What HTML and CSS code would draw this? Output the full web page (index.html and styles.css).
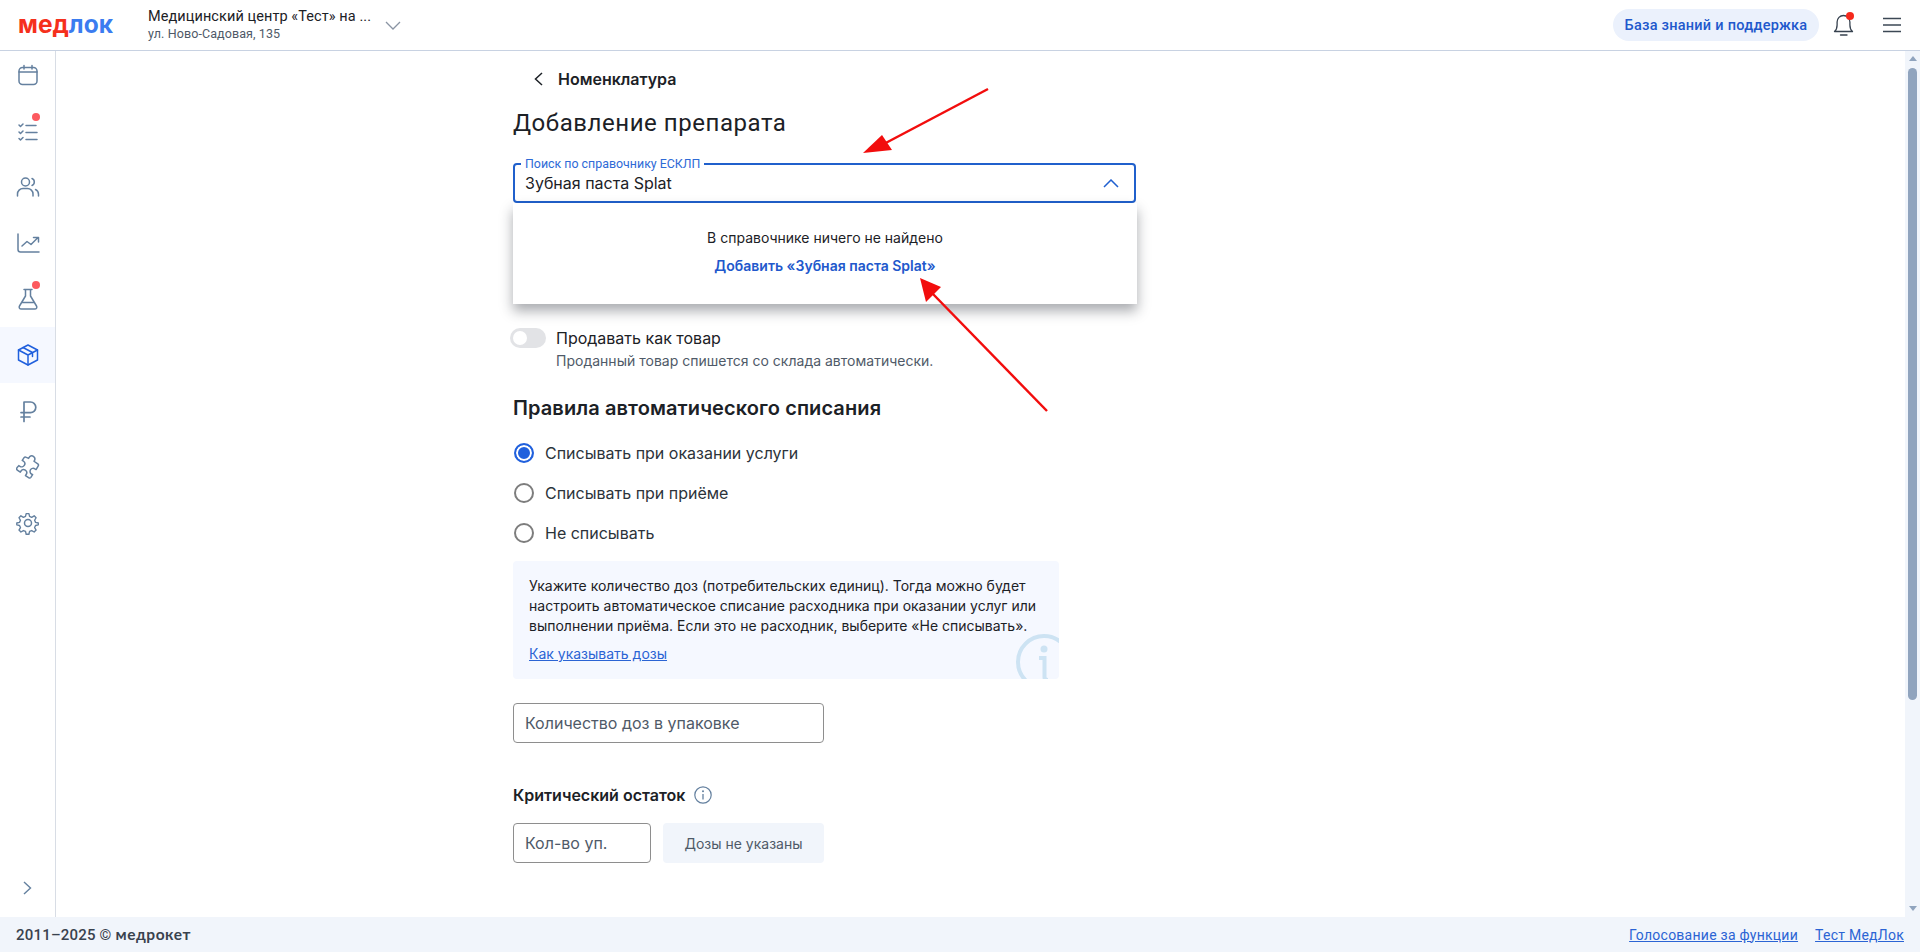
FILE: index.html
```html
<!DOCTYPE html>
<html lang="ru">
<head>
<meta charset="utf-8">
<title>Добавление препарата</title>
<link rel="stylesheet" href="styles.css">
</head>
<body>
<div class="app">
  <header class="topbar">
    <div class="logo"><span class="logo-red">мед</span><span class="logo-blue">лок</span></div>
    <div class="clinic">
      <div class="clinic-name">Медицинский центр «Тест» на ...</div>
      <div class="clinic-addr">ул. Ново-Садовая, 135</div>
    </div>
    <svg class="clinic-chev" width="16" height="9" viewBox="0 0 16 9"><path d="M1 1l7 7 7-7" fill="none" stroke="#8a94a3" stroke-width="1.3"/></svg>
    <div class="topbar-right">
      <a class="help-btn">База знаний и поддержка</a>
      <svg class="bell" width="24" height="26" viewBox="0 0 24 26"><path d="M2.5 19.5c1.8-1.6 2.6-3.6 2.6-6.6V10c0-3.6 2.8-6.5 6.4-6.5s6.4 2.9 6.4 6.5v2.900c0 3 .8 5 2.600 6.600z" fill="none" stroke="#37424f" stroke-width="1.300" stroke-linejoin="round"/><path d="M8.500 23h6.500" stroke="#37424f" stroke-width="1.300" stroke-linecap="round"/><circle cx="18" cy="4" r="4" fill="#f5291c"/></svg>
      <svg class="burger" width="18" height="16" viewBox="0 0 18 16"><path d="M0 1.500h18M0 8h18M0 14.500h18" stroke="#3c4855" stroke-width="1.300"/></svg>
    </div>
  </header>

  <div class="middle">
    <nav class="sidebar">
      <div class="nav-items">
        <div class="nav-item"><svg width="24" height="24" viewBox="0 0 24 24" fill="none" stroke="#64809f" stroke-width="1.500" stroke-linecap="round" stroke-linejoin="round"><rect x="3" y="4.500" width="18" height="17" rx="3.500"/><path d="M3 9h18M8 2.500v3.500M16 2.500v3.500"/></svg></div>
        <div class="nav-item"><svg width="24" height="24" viewBox="0 0 24 24" fill="none" stroke="#64809f" stroke-width="1.500" stroke-linecap="round" stroke-linejoin="round"><path d="M3 6l1.500 1.500L7 5M3 13l1.500 1.500L7 12M3 19.500L4.500 21 7 18.500M10 6.500h10M10 13.500h11M10 20.500h11"/></svg><span class="nav-dot"></span></div>
        <div class="nav-item"><svg width="24" height="24" viewBox="0 0 24 24" fill="none" stroke="#64809f" stroke-width="1.500" stroke-linecap="round"><circle cx="9.500" cy="7" r="4"/><path d="M1.500 21v-2c0-3 2.500-5.500 5.500-5.500h4.500c3 0 5.500 2.500 5.500 5.500v2M16 3.500c1.500.6 2.300 2 2.300 3.500s-.8 2.900-2.300 3.500M19.500 14.500c1.900.9 3 2.600 3 4.700V21"/></svg></div>
        <div class="nav-item"><svg width="24" height="24" viewBox="0 0 24 24" fill="none" stroke="#64809f" stroke-width="1.500" stroke-linecap="round" stroke-linejoin="round"><path d="M2 3v15.500c0 1.700 1 2.500 2.500 2.500H23M6 15l5-4.500 4 3 7-7M17.500 6.500H22.500V11"/></svg></div>
        <div class="nav-item"><svg width="24" height="24" viewBox="0 0 24 24" fill="none" stroke="#64809f" stroke-width="1.500" stroke-linecap="round" stroke-linejoin="round"><path d="M8 2.500h8M9.500 2.500v6.500L3.500 19c-.9 1.500.1 3 1.800 3h13.400c1.700 0 2.700-1.500 1.800-3l-6-10V2.500M6 15.500h12"/></svg><span class="nav-dot"></span></div>
        <div class="nav-item active"><svg width="24" height="24" viewBox="0 0 24 24" fill="none" stroke="#2060dd" stroke-width="1.500" stroke-linecap="round" stroke-linejoin="round"><path d="M12 2l9.500 5v10L12 22l-9.500-5V7z"/><path d="M2.500 7L12 12l9.500-5M12 12v10M7 4.500l9.500 5v4"/></svg></div>
        <div class="nav-item"><svg width="24" height="24" viewBox="0 0 24 24" fill="none" stroke="#64809f" stroke-width="1.700" stroke-linecap="round" stroke-linejoin="round"><path d="M8 22.500V3h6.500a5.300 5.300 0 0 1 0 10.600H5M5 18h9"/></svg></div>
        <div class="nav-item"><svg width="24" height="24" viewBox="0 0 24 24" fill="none" stroke="#64809f" stroke-width="1.300" stroke-linecap="round" stroke-linejoin="round"><path transform="translate(12 12) scale(1.150) translate(-12 -13)" d="M12.500 5.500l1-1.500a2.700 2.700 0 0 1 4.200 3.200l-.5.8 3.300 2.200c.7.500.8 1.200.3 2l-1.800 3-1-.6a2.700 2.700 0 0 0-3 4.500l1 .6-1.500 2.300c-.5.700-1.200.8-2 .3l-2.700-1.800.6-1a2.700 2.700 0 0 0-4.500-3l-.6 1-2.600-1.800c-.7-.5-.8-1.200-.3-2L4 11.800l1 .6a2.700 2.700 0 0 0 3-4.500l-1-.6 1.600-2.400c.5-.7 1.200-.8 2-.3z"/></svg></div>
        <div class="nav-item"><svg width="24" height="24" viewBox="0 0 24 24" fill="none" stroke="#64809f" stroke-width="1.500" stroke-linecap="round" stroke-linejoin="round"><circle cx="12" cy="12" r="3.500"/><path d="M10.500 1.800h3l.7 3 2.300 1 2.700-1.600 2.100 2.100-1.600 2.700 1 2.300 3 .7l0 2-3 .7-1 2.300 1.600 2.700-2.100 2.100-2.700-1.600-2.300 1-.7 3h-3l-.7-3-2.300-1-2.700 1.600-2.100-2.100 1.600-2.700-1-2.300-3-.7v-2l3-.7 1-2.300-1.600-2.700 2.100-2.100 2.700 1.600 2.300-1z" transform="translate(12 12) scale(.92) translate(-12.500 -12)"/></svg></div>
      </div>
      <div class="nav-expand"><svg width="9" height="14" viewBox="0 0 9 14"><path d="M1 1l6.500 6L1 13" fill="none" stroke="#64809f" stroke-width="1.400"/></svg></div>
    </nav>

    <main class="content">
      <div class="form">
        <div class="crumb">
          <svg width="9" height="14" viewBox="0 0 9 14"><path d="M8 1L1.500 7 8 13" fill="none" stroke="#1c2126" stroke-width="1.500"/></svg>
          <span>Номенклатура</span>
        </div>
        <h1 class="page-title">Добавление препарата</h1>

        <div class="search">
          <span class="float-label">Поиск по справочнику ЕСКЛП</span>
          <span class="search-value">Зубная паста Splat</span>
          <svg class="search-chev" width="16" height="9" viewBox="0 0 16 9"><path d="M1 8l7-7 7 7" fill="none" stroke="#2060d0" stroke-width="1.500"/></svg>
          <div class="dropdown">
            <div class="dd-empty">В справочнике ничего не найдено</div>
            <a class="dd-add">Добавить «Зубная паста Splat»</a>
          </div>
        </div>

        <div class="toggle-row">
          <span class="toggle"><span class="toggle-knob"></span></span>
          <div>
            <div class="toggle-label">Продавать как товар</div>
            <div class="toggle-hint">Проданный товар спишется со склада автоматически.</div>
          </div>
        </div>

        <h2 class="section-title">Правила автоматического списания</h2>

        <div class="radios">
          <div class="radio-row"><span class="radio checked"></span>Списывать при оказании услуги</div>
          <div class="radio-row"><span class="radio"></span>Списывать при приёме</div>
          <div class="radio-row"><span class="radio"></span>Не списывать</div>
        </div>

        <div class="info-box">
          <p>Укажите количество доз (потребительских единиц). Тогда можно будет настроить автоматическое списание расходника при оказании услуг или выполнении приёма. Если это не расходник, выберите «Не списывать».</p>
          <a class="info-link">Как указывать дозы</a>
          <svg class="info-mark" width="60" height="60" viewBox="0 0 60 60" fill="none"><circle cx="30" cy="30" r="26" stroke="#cde3f3" stroke-width="4"/><circle cx="30" cy="17" r="3.500" fill="#cde3f3"/><path d="M25 26h5.500v19c0 2 1 3 3.500 3" stroke="#cde3f3" stroke-width="4"/></svg>
        </div>

        <div class="input dose-input">Количество доз в упаковке</div>

        <div class="crit-title">
          <span>Критический остаток</span>
          <svg width="18" height="18" viewBox="0 0 18 18" fill="none"><circle cx="9" cy="9" r="8.200" stroke="#64809f" stroke-width="1.200"/><circle cx="9" cy="5.300" r="1" fill="#64809f"/><path d="M9 8v5.500" stroke="#64809f" stroke-width="1.300"/></svg>
        </div>
        <div class="crit-row">
          <div class="input crit-input">Кол-во уп.</div>
          <div class="crit-note">Дозы не указаны</div>
        </div>
      </div>
    </main>

    <div class="scrollbar">
      <span class="sb-up"></span>
      <span class="sb-thumb"></span>
      <span class="sb-space"></span>
      <span class="sb-down"></span>
    </div>
  </div>

  <footer class="footer">
    <div class="copy">2011–2025 © <span class="copy-brand">медрокет</span></div>
    <div class="footer-links"><a>Голосование за функции</a><a>Тест МедЛок</a></div>
  </footer>
</div>

<svg class="annotations" width="1920" height="952" viewBox="0 0 1920 952">
  <path d="M988 89L880 146" stroke="#f20d0d" stroke-width="2.500"/>
  <path d="M863 153L882 135L892 150z" fill="#f20d0d"/>
  <path d="M1047 411L932 293" stroke="#f20d0d" stroke-width="2.500"/>
  <path d="M920 278L941 287L926 302z" fill="#f20d0d"/>
</svg>
</body>
</html>
```

FILE: styles.css
```css
* { box-sizing: border-box; }
html, body { margin: 0; height: 100%; overflow: hidden; }
body { font-family: Inter, "Noto Sans", sans-serif; color: #1c2126; background: #fff; }
a { cursor: pointer; }

.app { display: flex; flex-direction: column; height: 952px; }

/* top bar */
.topbar { flex: 0 0 51px; display: flex; align-items: center; border-bottom: 1px solid #c8d2e2; padding-left: 18px; background: #fff; }
.logo { width: 130px; font-family: Inter, sans-serif; font-weight: 700; font-size: 24.500px; line-height: 1; letter-spacing: 0; position: relative; top: -1px; }
.logo-red { color: #f5301c; }
.logo-blue { color: #3b7cf0; }
.clinic { width: 237px; }
.clinic-name { font-family: Roboto, sans-serif; font-size: 14.500px; line-height: 18px; color: #1c2126; letter-spacing: .08px; }
.clinic-addr { font-family: Roboto, sans-serif; font-size: 12.500px; line-height: 16px; color: #4f5a68; letter-spacing: .1px; }
.clinic-chev { margin-top: 1px; }
.topbar-right { margin-left: auto; display: flex; align-items: center; }
.help-btn { height: 32px; width: 206px; display: flex; align-items: center; justify-content: center; border-radius: 16px; background: #ebf1fc; color: #2158cc; font-family: Roboto, sans-serif; font-weight: 500; font-size: 14.500px; letter-spacing: .25px; }
.bell { margin-left: 13px; }
.burger { margin-left: 27px; margin-right: 19px; }

/* middle */
.middle { flex: 1; display: flex; min-height: 0; }
.sidebar { flex: 0 0 56px; border-right: 1px solid #d8dde5; display: flex; flex-direction: column; justify-content: space-between; }
.nav-items { display: flex; flex-direction: column; }
.nav-item { height: 56px; display: flex; align-items: center; justify-content: center; position: relative; }
.nav-item:first-child { height: 48px; margin-bottom: 4px; }
.nav-item.active { background: #f5f8ff; }
.nav-dot { position: absolute; left: 32px; top: 10px; width: 8px; height: 8px; border-radius: 50%; background: #fc5a5f; }
.nav-expand { height: 58px; display: flex; align-items: center; justify-content: center; }

.content { flex: 1; min-width: 0; padding-left: 457px; }
.form { width: 623px; padding-top: 16px; }
.crumb { display: flex; align-items: center; height: 24px; padding-left: 21px; gap: 15px; font-weight: 600; font-size: 16px; }
.page-title { margin: 15px 0 0; font-family: Roboto, sans-serif; font-weight: 400; font-size: 24px; line-height: 34px; letter-spacing: .55px; color: #1c2126; }

.search { position: relative; margin-top: 23px; height: 40px; border: 2px solid #2060cc; border-radius: 4px; padding-left: 10px; display: flex; align-items: center; background: #fff; }
.float-label { position: absolute; left: 6px; top: -8px; padding: 0 4px; background: #fff; font-family: Roboto, sans-serif; font-size: 12.400px; line-height: 13px; color: #2e6ad6; }
.search-value { font-size: 16px; }
.search-chev { position: absolute; right: 15px; top: 14px; }
.dropdown { position: absolute; left: -2px; right: -3px; top: 38px; height: 101px; background: #fff; box-shadow: 0 7px 12px rgba(30, 35, 45, .38); display: flex; flex-direction: column; align-items: center; padding-top: 25px; z-index: 2; }
.dd-empty { font-size: 14px; line-height: 20px; }
.dd-add { margin-top: 8px; font-size: 14px; line-height: 20px; font-weight: 600; color: #2158cc; }

.toggle-row { display: flex; margin-top: 125px; margin-left: -3px; gap: 10px; }
.toggle { flex: none; width: 36px; height: 20px; border-radius: 10px; background: #e2e3e6; padding: 3px; margin-top: 0; }
.toggle-knob { display: block; width: 14px; height: 14px; border-radius: 50%; background: #fff; }
.toggle-label { font-size: 16px; line-height: 20px; color: #1c2126; }
.toggle-hint { font-size: 14px; line-height: 20px; margin-top: 3px; color: #4f5a68; letter-spacing: .01px; }

.section-title { margin: 23px 0 0; font-weight: 600; font-size: 20px; line-height: 28px; letter-spacing: .1px; color: #1c2126; }

.radios { margin-top: 21px; display: flex; flex-direction: column; gap: 20px; }
.radio-row { display: flex; align-items: center; gap: 11px; height: 20px; padding-left: 1px; font-size: 16px; color: #2c333a; }
.radio { flex: none; width: 20px; height: 20px; border: 2px solid #7d7d7d; border-radius: 50%; background: #fff; }
.radio.checked { border-color: #2060dd; background: #2060dd; box-shadow: inset 0 0 0 2px #fff; }

.info-box { position: relative; overflow: hidden; margin-top: 18px; width: 546px; height: 118px; padding: 15px 16px 0; border-radius: 4px; background: #f5f8ff; font-size: 14px; line-height: 20px; color: #1c2126; }
.info-box p { margin: 0; }
.info-link { display: block; margin-top: 8px; color: #2b64d4; text-decoration: underline; }
.info-mark { position: absolute; left: 501px; top: 71px; }

.input { height: 40px; border: 1px solid #8e8e8e; border-radius: 4px; padding-left: 11px; display: flex; align-items: center; font-size: 16px; color: #4f5a68; background: #fff; }
.dose-input { margin-top: 24px; width: 311px; }

.crit-title { margin-top: 42px; display: flex; align-items: center; gap: 9px; height: 20px; font-weight: 600; font-size: 16px; color: #1c2126; }
.crit-row { margin-top: 18px; display: flex; gap: 12px; width: 311px; }
.crit-input { width: 138px; }
.crit-note { flex: 1; height: 40px; border-radius: 4px; background: #f1f5fb; display: flex; align-items: center; justify-content: center; font-size: 14px; color: #4f5a68; }

/* scrollbar */
.scrollbar { flex: 0 0 15px; background: #f1f5fb; display: flex; flex-direction: column; align-items: center; padding: 5px 0 6px; }
.sb-up { width: 0; height: 0; border: 4.500px solid transparent; border-top: 0; border-bottom: 5px solid #90a4be; }
.sb-thumb { width: 9px; height: 632px; margin-top: 7px; border-radius: 5px; background: #90a4be; }
.sb-space { flex: 1; }
.sb-down { width: 0; height: 0; border: 4.500px solid transparent; border-bottom: 0; border-top: 5px solid #90a4be; }

/* footer */
.footer { flex: 0 0 35px; background: #f1f5fb; display: flex; align-items: center; justify-content: space-between; padding: 0 16px; color: #39424e; }
.copy { font-family: Roboto, sans-serif; font-weight: 500; font-size: 15px; letter-spacing: .2px; }
.copy-brand { font-family: Lato, sans-serif; font-weight: 700; font-size: 15.500px; letter-spacing: .55px; }
.footer-links { display: flex; gap: 17px; }
.footer-links a { font-family: Roboto, sans-serif; font-size: 14px; letter-spacing: .25px; color: #2b64d4; text-decoration: underline; }

.annotations { position: absolute; left: 0; top: 0; pointer-events: none; z-index: 5; }
```
